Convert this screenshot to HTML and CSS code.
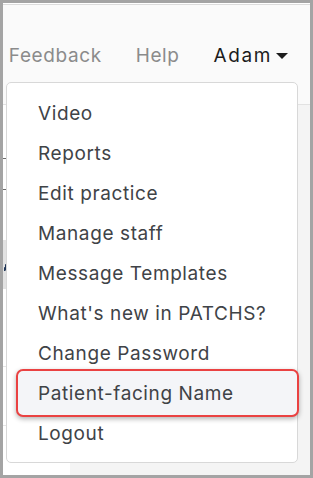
FILE: index.html
```html
<!DOCTYPE html>
<html lang="en">
<head>
<meta charset="utf-8">
<title>Menu</title>
<link rel="stylesheet" href="styles.css">
</head>
<body>
<div class="frame">
  <header class="topbar">
    <nav class="nav">
      <a class="nav-link muted">Feedback</a>
      <a class="nav-link muted">Help</a>
      <a class="nav-link user">Adam<span class="caret"></span></a>
    </nav>
  </header>
  <div class="main">
    <aside class="sidebar">
      <div class="sb-row r1"></div>
      <div class="sb-row r2"></div>
      <div class="sb-gap"></div>
      <div class="sb-active"><span class="sb-mark"></span></div>
      <div class="sb-row r3"></div>
      <div class="sb-row r4"></div>
    </aside>
    <section class="content"></section>
  </div>
  <ul class="dropdown">
    <li class="item">Video</li>
    <li class="item">Reports</li>
    <li class="item">Edit practice</li>
    <li class="item">Manage staff</li>
    <li class="item">Message Templates</li>
    <li class="item">What's new in PATCHS?</li>
    <li class="item">Change Password</li>
    <li class="item highlighted">Patient-facing Name</li>
    <li class="item">Logout</li>
  </ul>
</div>
</body>
</html>
```

FILE: styles.css
```css
* { box-sizing: border-box; }
html, body { margin: 0; padding: 0; background: #a4a4a4; }
body { font-family: Inter, "Noto Sans", sans-serif; }

.frame {
  position: relative;
  width: 313px;
  height: 478px;
  border: 3px solid #a4a4a4;
  background: #f4f4f4;
  overflow: hidden;
  display: flex;
  flex-direction: column;
}

.topbar {
  height: 102px;
  background: #fafafa;
  border-top: 1px solid #ffffff;
  box-shadow: inset 0 1px 0 #dcdcdc;
  border-bottom: 1px solid #e2e2e2;
  flex: none;
}

.nav {
  display: flex;
  justify-content: flex-end;
  gap: 34px;
  padding: 40px 22px 0 0;
  font-size: 19px;
  letter-spacing: 0.6px;
  white-space: nowrap;
}
.nav-link { text-decoration: none; }
.muted { color: #8b8b8b; }
.user { color: #1c1c1c; display: flex; align-items: center; letter-spacing: 1.6px; }
.caret {
  display: inline-block;
  margin-left: 4px;
  width: 0; height: 0;
  border-top: 6px solid #1c1c1c;
  border-left: 6px solid transparent;
  border-right: 6px solid transparent;
}

.main { flex: 1; display: flex; }
.sidebar { width: 67px; background: #ffffff; display: flex; flex-direction: column; }
.sb-row { border-bottom: 1px solid #e3e3e3; }
.r1 { height: 54px; border-bottom-color: #6a6a6a; }
.r2 { height: 31px; border-bottom-color: #6a6a6a; }
.sb-gap { height: 50px; }
.sb-active { height: 49px; background: #e2e2e2; padding: 22px 0 0 0; }
.sb-mark {
  display: block;
  width: 3px;
  height: 9px;
  margin-left: 1px;
  background: linear-gradient(to bottom right, transparent 35%, #1f3556 40%, #1f3556 70%, transparent 75%);
}
.r3 { height: 78px; border-bottom-color: #e6e6e6; }
.r4 { height: 59px; border-bottom-color: #e6e6e6; }
.content { flex: 1; background: #f4f4f4; }

.dropdown {
  position: absolute;
  left: 3px;
  top: 79px;
  width: 292px;
  margin: 0;
  padding: 11px 0 8px;
  list-style: none;
  background: #ffffff;
  border: 1px solid #d8d8d8;
  border-radius: 5px;
}
.item {
  position: relative;
  height: 40px;
  line-height: 40px;
  padding-left: 31px;
  font-size: 19px;
  letter-spacing: 0.6px;
  color: #3f4347;
  white-space: nowrap;
}
.highlighted::before {
  content: "";
  position: absolute;
  left: 9px;
  right: -2px;
  top: -5px;
  bottom: -3px;
  border: 2px solid #ea4242;
  border-radius: 7px;
  background: #f4f5f8;
  box-shadow: 0 2px 5px rgba(0, 0, 0, 0.3);
  z-index: -1;
}
.highlighted { z-index: 0; }
```
